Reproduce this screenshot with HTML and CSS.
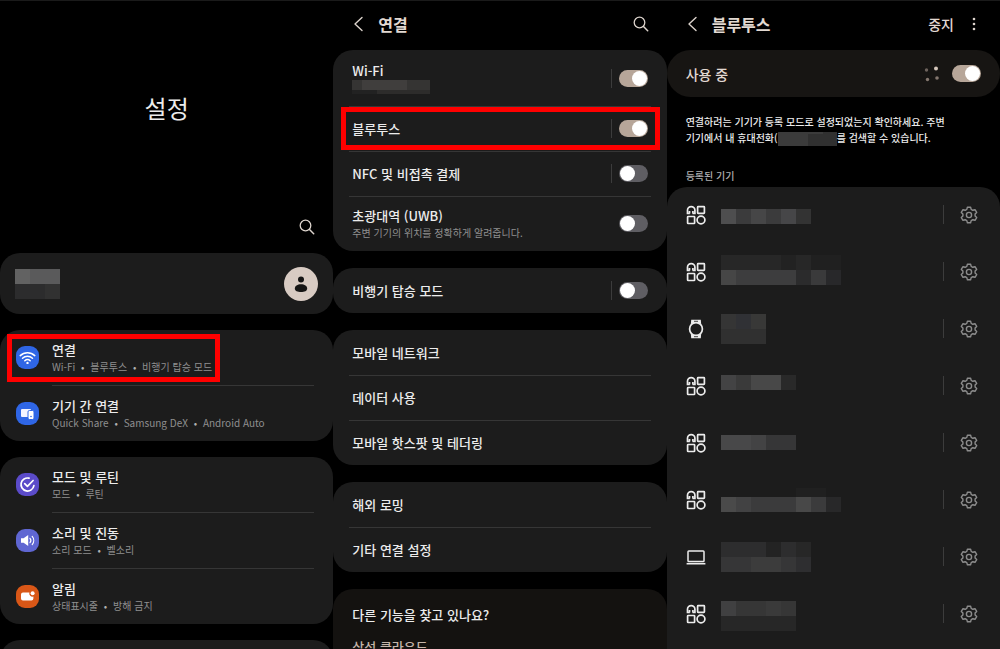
FILE: index.html
```html
<!DOCTYPE html>
<html lang="ko">
<head>
  <meta charset="UTF-8">
  <meta name="viewport" content="width=device-width, initial-scale=1.0">
  <title>블루투스 설정</title>
  <link rel="stylesheet" href="styles.css">
</head>
<body>
  <!-- Shared icons -->
  <svg class="sprite" aria-hidden="true">
    <symbol id="search" viewBox="0 0 18 18">
      <circle cx="7.5" cy="7.5" r="5.3" fill="none" stroke="currentColor" stroke-width="1.3"/>
      <path d="M11.5 11.5l4.2 4.2" stroke="currentColor" stroke-width="1.5" stroke-linecap="round"/>
    </symbol>
    <symbol id="back" viewBox="0 0 12 18">
      <path d="M10 2.5L3 9l7 6.5" fill="none" stroke="currentColor" stroke-width="1.4" stroke-linecap="round" stroke-linejoin="round"/>
    </symbol>
    <symbol id="devices" viewBox="0 0 20 20">
      <g fill="none" stroke="currentColor" stroke-width="1.7">
        <path d="M3.8 8.500H1.500V5.300a3.700 3.700 0 0 1 7.400 0V8.500H6.600M3.500 8.500V6M6.900 8.500V6"/>
        <rect x="11.600" y="1.600" width="6.800" height="6.800" rx=".6"/>
        <rect x="1.600" y="11.500" width="7" height="7" rx=".6"/>
        <circle cx="15" cy="15" r="3.900"/>
      </g>
    </symbol>
    <symbol id="watch" viewBox="0 0 20 20">
      <circle cx="10" cy="10" r="6.400" fill="none" stroke="currentColor" stroke-width="1.700"/>
      <path d="M4.800 5.500L5.200.8h9.600l.4 4.700-2-1.600H6.800zM4.800 14.500L5.200 19.200h9.600l.4-4.700-2 1.600H6.800z" fill="currentColor"/>
      <path d="M8 2.300h4M8 17.700h4" stroke="#1c1c1c" stroke-width=".8"/>
    </symbol>
    <symbol id="laptop" viewBox="0 0 20 20">
      <rect x="2" y="4" width="16" height="10.500" rx=".8" fill="none" stroke="currentColor" stroke-width="1.500"/>
      <path d="M.6 16.700h18.800" stroke="currentColor" stroke-width="1.600"/>
    </symbol>
    <symbol id="gear" viewBox="0 0 20 20">
      <g fill="none" stroke="currentColor" stroke-width="1.400" stroke-linejoin="round">
        <path d="M8.400 2.200h3.200l.6 2.200 1.600.9 2.200-.6 1.700 2.700-1.600 1.700v1.800l1.600 1.700-1.700 2.700-2.200-.6-1.600.9-.6 2.200H8.400l-.6-2.200-1.600-.9-2.200.6-1.700-2.700 1.600-1.700V9.100L2.300 7.400 4 4.700l2.200.6 1.600-.9z"/>
        <circle cx="10" cy="10" r="2.600"/>
      </g>
    </symbol>
  </svg>

  <!-- Settings home -->
  <section class="screen">
    <div class="hero">
      <h1>설정</h1>
      <button class="icon-btn hero-search" aria-label="검색"><svg width="18" height="18"><use href="#search"/></svg></button>
    </div>
    <div class="card account">
      <svg width="45" height="30" shape-rendering="crispEdges" aria-hidden="true">
        <rect width="45" height="15" fill="#626262"/><rect x="15" width="30" height="15" fill="#5a5a5b"/>
        <rect y="15" width="45" height="15" fill="#2c2c2d"/><rect x="30" y="15" width="15" height="15" fill="#313131"/>
      </svg>
      <svg width="34" height="34" viewBox="0 0 34 34" aria-hidden="true">
        <circle cx="17" cy="17" r="17" fill="#d8cbc3"/>
        <circle cx="17" cy="12.500" r="3" fill="#151515"/>
        <path d="M10.800 21.500c0-2.500 2.700-4.300 6.200-4.300s6.200 1.800 6.200 4.300-2.700 3.500-6.200 3.500-6.200-1-6.200-3.500z" fill="#151515"/>
      </svg>
    </div>
    <div class="card menu">
      <a href="#connections" class="marked">
        <svg class="app blue" viewBox="0 0 23 23">
          <g fill="none" stroke="#fff" stroke-width="1.500" stroke-linecap="round">
            <path d="M4.200 9.600a10.500 10.500 0 0 1 14.600 0M6.500 12.200a7.200 7.200 0 0 1 10 0M8.800 14.700a4 4 0 0 1 5.400 0"/>
          </g>
          <circle cx="11.500" cy="16.900" r="1.200" fill="#fff"/>
        </svg>
        <span class="label">연결<small>Wi-Fi <i>•</i> 블루투스 <i>•</i> 비행기 탑승 모드</small></span>
      </a>
      <a href="#devices-link">
        <svg class="app blue" viewBox="0 0 23 23">
          <rect x="5" y="7" width="10" height="8" rx="1" fill="#f4f4ff"/>
          <rect x="12" y="8.500" width="6" height="9" rx="1.400" fill="#fff" stroke="#2f66e6"/>
          <circle cx="15" cy="14.500" r=".8" fill="#2f66e6"/>
        </svg>
        <span class="label">기기 간 연결<small>Quick Share <i>•</i> Samsung DeX <i>•</i> Android Auto</small></span>
      </a>
    </div>
    <div class="card menu">
      <a href="#modes">
        <svg class="app violet" viewBox="0 0 23 23">
          <path d="M13 5.200a6.500 6.500 0 1 0 4.900 7.500" fill="none" stroke="#fff" stroke-width="1.700" stroke-linecap="round"/>
          <path d="M8.700 10.700l2.700 2.700 5.700-5.900" fill="none" stroke="#fff" stroke-width="1.700" stroke-linecap="round" stroke-linejoin="round"/>
        </svg>
        <span class="label">모드 및 루틴<small>모드 <i>•</i> 루틴</small></span>
      </a>
      <a href="#sound">
        <svg class="app indigo" viewBox="0 0 23 23">
          <path d="M5 9.300h2.600l4.600-3.400v11.200l-4.600-3.400H5z" fill="#fff"/>
          <path d="M14 9.300a3.500 3.500 0 0 1 0 4.400M16.200 7.400a6.300 6.300 0 0 1 0 8.200" fill="none" stroke="#fff" stroke-width="1.200" stroke-linecap="round"/>
        </svg>
        <span class="label">소리 및 진동<small>소리 모드 <i>•</i> 벨소리</small></span>
      </a>
      <a href="#notifications">
        <svg class="app orange" viewBox="0 0 23 23">
          <path d="M7 7.500h6.400a3.200 3.200 0 0 0 4 4V13.500a2 2 0 0 1-2 2H7a2 2 0 0 1-2-2v-4a2 2 0 0 1 2-2z" fill="#fff"/>
          <circle cx="16.600" cy="8.300" r="2" fill="#fff"/>
        </svg>
        <span class="label">알림<small>상태표시줄 <i>•</i> 방해 금지</small></span>
      </a>
    </div>
    <div class="card next"></div>
  </section>

  <!-- Connections -->
  <section class="screen wide" id="connections">
    <header>
      <button class="icon-btn" aria-label="뒤로"><svg width="12" height="18"><use href="#back"/></svg></button>
      <h2>연결</h2>
      <button class="icon-btn" aria-label="검색"><svg width="18" height="18"><use href="#search"/></svg></button>
    </header>
    <div class="card list">
      <div class="row wifi">
        <label for="wifi">Wi-Fi
          <svg width="78" height="14" shape-rendering="crispEdges" aria-hidden="true">
            <rect width="78" height="14" fill="#2d2c2b"/><rect width="78" height="10" fill="#353433"/>
            <rect x="10" width="45" height="10" fill="#403e3d"/><rect y="10" width="25" height="4" fill="#222"/>
          </svg>
        </label>
        <span class="bar"></span><input type="checkbox" class="switch" id="wifi" checked>
      </div>
      <div class="row marked">
        <label for="bt">블루투스</label>
        <span class="bar"></span><input type="checkbox" class="switch" id="bt" checked>
      </div>
      <div class="row">
        <label for="nfc">NFC 및 비접촉 결제</label>
        <span class="bar"></span><input type="checkbox" class="switch" id="nfc">
      </div>
      <div class="row tall">
        <label for="uwb">초광대역 (UWB)<small>주변 기기의 위치를 정확하게 알려줍니다.</small></label>
        <input type="checkbox" class="switch" id="uwb">
      </div>
    </div>
    <div class="card list">
      <div class="row">
        <label for="plane">비행기 탑승 모드</label>
        <span class="bar"></span><input type="checkbox" class="switch" id="plane">
      </div>
    </div>
    <div class="card list">
      <a class="row" href="#network">모바일 네트워크</a>
      <a class="row" href="#data">데이터 사용</a>
      <a class="row" href="#hotspot">모바일 핫스팟 및 테더링</a>
    </div>
    <div class="card list">
      <a class="row" href="#roaming">해외 로밍</a>
      <a class="row" href="#more">기타 연결 설정</a>
    </div>
    <div class="card related">
      <h3>다른 기능을 찾고 있나요?</h3>
      <a href="#cloud">삼성 클라우드</a>
    </div>
  </section>

  <!-- Bluetooth -->
  <section class="screen wide">
    <header>
      <button class="icon-btn" aria-label="뒤로"><svg width="12" height="18"><use href="#back"/></svg></button>
      <h2>블루투스</h2>
      <button class="stop">중지</button>
      <button class="icon-btn" aria-label="더보기">
        <svg width="18" height="18" viewBox="0 0 18 18" fill="currentColor"><circle cx="9" cy="4" r="1.300"/><circle cx="9" cy="9" r="1.300"/><circle cx="9" cy="14" r="1.300"/></svg>
      </button>
    </header>
    <div class="card active">
      <label for="power">사용 중</label>
      <svg width="16" height="16" viewBox="0 0 16 16" aria-hidden="true">
        <circle cx="2.500" cy="4" r="1.700" fill="#6d625c"/><circle cx="12" cy="2.500" r="2" fill="#d5c6bb"/>
        <circle cx="3.500" cy="13.500" r="1.700" fill="#84776f"/><circle cx="13" cy="12" r="1.800" fill="#84776f"/>
      </svg>
      <input type="checkbox" class="switch" id="power" checked>
    </div>
    <div class="hint">
      <p>연결하려는 기기가 등록 모드로 설정되었는지 확인하세요. 주변 기기에서 내 휴대전화(<svg width="59" height="14" shape-rendering="crispEdges" aria-hidden="true"><rect width="59" height="14" fill="#303030"/><rect width="30" height="14" fill="#3b3b3b"/><rect x="30" width="15" height="2" fill="#3b3b3b"/></svg>를 검색할 수 있습니다.</p>
      <h3>등록된 기기</h3>
    </div>
    <ul class="card paired">
      <li>
        <svg class="kind"><use href="#devices"/></svg>
        <svg class="name" width="90" height="19" viewBox="0 -4 90 19" shape-rendering="crispEdges">
          <rect width="90" height="15" fill="#3b3b3c"/><rect width="15" height="15" fill="#4e4e4f"/><rect x="30" width="15" height="15" fill="#464647"/><rect x="60" width="15" height="15" fill="#464648"/><rect x="75" width="15" height="15" fill="#333"/>
        </svg>
        <span class="bar"></span><button class="icon-btn" aria-label="기기 설정"><svg class="gear"><use href="#gear"/></svg></button>
      </li>
      <li>
        <svg class="kind"><use href="#devices"/></svg>
        <svg class="name" width="120" height="34" shape-rendering="crispEdges">
          <rect width="120" height="15" fill="#272727"/><rect x="60" width="15" height="15" fill="#222"/><rect x="90" width="30" height="15" fill="#202020"/>
          <rect y="15" width="75" height="15" fill="#3d3d3e"/><rect y="15" width="15" height="15" fill="#464646"/><rect x="75" y="15" width="15" height="15" fill="#2b2b2c"/><rect x="90" y="15" width="15" height="15" fill="#3a3a3b"/><rect x="105" y="15" width="15" height="15" fill="#28282a"/>
        </svg>
        <span class="bar"></span><button class="icon-btn" aria-label="기기 설정"><svg class="gear"><use href="#gear"/></svg></button>
      </li>
      <li>
        <svg class="kind"><use href="#watch"/></svg>
        <svg class="name" width="45" height="30" shape-rendering="crispEdges">
          <rect width="45" height="30" fill="#303030"/><rect width="15" height="15" fill="#353535"/><rect x="15" width="15" height="15" fill="#303135"/><rect x="30" width="15" height="15" fill="#383837"/>
        </svg>
        <span class="bar"></span><button class="icon-btn" aria-label="기기 설정"><svg class="gear"><use href="#gear"/></svg></button>
      </li>
      <li>
        <svg class="kind"><use href="#devices"/></svg>
        <svg class="name" width="75" height="21" shape-rendering="crispEdges">
          <rect width="75" height="15" fill="#484848"/><rect width="15" height="15" fill="#434344"/><rect x="15" width="15" height="15" fill="#3a3a3a"/><rect x="60" width="15" height="15" fill="#292929"/>
        </svg>
        <span class="bar"></span><button class="icon-btn" aria-label="기기 설정"><svg class="gear"><use href="#gear"/></svg></button>
      </li>
      <li>
        <svg class="kind"><use href="#devices"/></svg>
        <svg class="name" width="75" height="15" shape-rendering="crispEdges">
          <rect width="75" height="15" fill="#363637"/><rect width="30" height="15" fill="#484849"/><rect x="30" width="15" height="15" fill="#434344"/>
        </svg>
        <span class="bar"></span><button class="icon-btn" aria-label="기기 설정"><svg class="gear"><use href="#gear"/></svg></button>
      </li>
      <li>
        <svg class="kind"><use href="#devices"/></svg>
        <svg class="name" width="120" height="24" shape-rendering="crispEdges">
          <rect y="9" width="120" height="15" fill="#3b3b3c"/><rect y="9" width="15" height="15" fill="#4a4a4a"/><rect x="15" y="9" width="15" height="15" fill="#424243"/><rect x="75" y="9" width="15" height="15" fill="#484848"/><rect x="105" y="9" width="15" height="15" fill="#282829"/><rect x="75" width="30" height="9" fill="#202020"/>
        </svg>
        <span class="bar"></span><button class="icon-btn" aria-label="기기 설정"><svg class="gear"><use href="#gear"/></svg></button>
      </li>
      <li>
        <svg class="kind"><use href="#laptop"/></svg>
        <svg class="name" width="90" height="30" shape-rendering="crispEdges">
          <rect width="90" height="15" fill="#2d2d2e"/><rect x="45" width="15" height="15" fill="#232323"/><rect x="75" width="15" height="15" fill="#272727"/><rect y="15" width="90" height="15" fill="#363637"/><rect x="30" y="15" width="30" height="15" fill="#3c3c3c"/><rect x="75" y="15" width="15" height="15" fill="#2e2e30"/>
        </svg>
        <span class="bar"></span><button class="icon-btn" aria-label="기기 설정"><svg class="gear"><use href="#gear"/></svg></button>
      </li>
      <li>
        <svg class="kind"><use href="#devices"/></svg>
        <svg class="name" width="75" height="34" viewBox="0 -4 75 34" shape-rendering="crispEdges">
          <rect width="75" height="15" fill="#363636"/><rect width="15" height="15" fill="#404041"/><rect x="45" width="15" height="15" fill="#3a3a3a"/><rect y="15" width="75" height="15" fill="#272727"/>
        </svg>
        <span class="bar"></span><button class="icon-btn" aria-label="기기 설정"><svg class="gear"><use href="#gear"/></svg></button>
      </li>
    </ul>
  </section>
</body>
</html>
```
FILE: styles.css
```css
* {
  box-sizing: border-box;
}

body {
  margin: 0;
  height: 100vh;
  overflow: hidden;
  display: grid;
  grid-template-columns: repeat(3, 1fr);
  background: #000;
  color: #ececec;
  font-family: "Noto Sans CJK KR", sans-serif;
  font-size: 13px;
  font-weight: 500;
  line-height: 18px;
}

h1, h2, h3, p, ul {
  margin: 0;
  padding: 0;
}

a {
  color: inherit;
  text-decoration: none;
}

svg {
  display: block;
  flex: none;
}

button {
  border: 0;
  padding: 0;
  background: none;
  color: inherit;
  font: inherit;
}

small {
  display: block;
  color: #8f8f8f;
  font-size: 10px;
  font-weight: 400;
  line-height: 15px;
}

.sprite {
  position: absolute;
  width: 0;
  height: 0;
}

.screen {
  min-width: 0;
  height: 100vh;
  overflow: hidden;
  display: flex;
  flex-direction: column;
  gap: 16px;
  border-top: 1px solid #1a1a1a;
}

.wide {
  gap: 17px;
}

.card {
  flex: none;
  background: #1c1c1c;
  border-radius: 20px;
}

.icon-btn {
  display: flex;
  color: #dcd3cc;
}

/* Red frame round the item to tap */
.marked {
  position: relative;
}

.marked::after {
  content: "";
  position: absolute;
  box-sizing: border-box;
  border: 5px solid #f00;
}

/* Settings home */
.hero {
  flex: none;
  height: 236px;
  display: flex;
  flex-direction: column;
  justify-content: space-between;
  align-items: center;
  padding: 89px 17px 1px;
}

.hero h1 {
  font-size: 24px;
  font-weight: 400;
  line-height: 36px;
}

.hero-search {
  align-self: flex-end;
}

.account {
  height: 61px;
  display: flex;
  align-items: center;
  justify-content: space-between;
  padding: 0 15px;
}

.menu a {
  height: 56px;
  display: flex;
  align-items: center;
  gap: 13px;
  padding-left: 16px;
}

.menu a:first-child {
  height: 55px;
}

.menu .label {
  flex: 1;
  height: 100%;
  margin-right: 19px;
  padding-top: 11px;
}

.menu a + a .label {
  border-top: 1px solid #363636;
}

.menu i {
  margin: 0 3px;
  color: #b0b0b0;
  font-style: normal;
}

.menu .marked::after {
  top: 4px;
  left: 7px;
  width: 213px;
  height: 48px;
}

.next {
  height: 56px;
}

.app {
  width: 23px;
  height: 23px;
  border-radius: 9px;
}

.blue {
  background: #2f66e6;
}

.violet {
  background: #5b4bc9;
}

.indigo {
  background: #5f66d2;
}

.orange {
  background: #d95717;
}

/* Header bar */
header {
  flex: none;
  height: 32px;
  display: flex;
  align-items: center;
  padding: 14px 17px 0 19px;
  color: #e2d9d2;
}

header h2 {
  flex: 1;
  margin-left: 14px;
  font-size: 16px;
  font-weight: 700;
  line-height: 20px;
}

.stop {
  margin-right: 11px;
  font-size: 14px;
}

/* Rows with switches */
.row {
  height: 45px;
  display: flex;
  align-items: center;
  gap: 7px;
  padding: 0 19px;
  background: linear-gradient(#363636, #363636) no-repeat center top / calc(100% - 32px) 1px;
}

.row:first-child {
  background: none;
}

.row label {
  flex: 1;
}

.wifi {
  height: 56px;
}

.tall {
  height: 55px;
}

.list .marked::after {
  top: 1px;
  bottom: 1px;
  left: 8px;
  right: 7px;
}

.bar {
  width: 1px;
  height: 19px;
  background: #3c3c3c;
}

.switch {
  appearance: none;
  display: flex;
  width: 29px;
  height: 17px;
  margin: 0;
  padding: 1px;
  border-radius: 9px;
  background: #5f5e63;
}

.switch::before {
  content: "";
  width: 15px;
  height: 15px;
  border-radius: 50%;
  background: #fff;
}

.switch:checked {
  justify-content: flex-end;
  background: #b7a699;
}

.related {
  height: 120px;
  padding: 16px 19px;
  background: #141210;
}

.related h3 {
  font-size: 13px;
  font-weight: 500;
  line-height: 20px;
}

.related a {
  display: block;
  margin-top: 13px;
  color: #c4b5aa;
}

/* Bluetooth */
.active {
  height: 47px;
  display: flex;
  align-items: center;
  gap: 12px;
  padding: 0 19px;
  border-radius: 24px;
  background: #171513;
  color: #e2d9d2;
  font-size: 14px;
}

.active label {
  flex: 1;
}

.hint {
  flex: none;
  height: 73px;
  display: flex;
  flex-direction: column;
  justify-content: space-between;
  padding: 0 19px 3px;
  font-size: 10px;
  line-height: 16px;
  word-break: keep-all;
}

.hint svg {
  display: inline-block;
  vertical-align: middle;
}

.hint h3 {
  color: #b0b0b0;
  font-size: 10px;
  font-weight: 500;
}

.screen .paired {
  margin-top: -17px;
  padding-bottom: 30px;
  list-style: none;
}

.paired li {
  height: 57px;
  display: flex;
  align-items: center;
  padding: 0 21px 2px 19px;
}

.paired .name {
  margin: 0 auto 0 15px;
}

.paired .bar {
  margin-right: 15px;
}

.kind {
  width: 20px;
  height: 20px;
}

.gear {
  width: 20px;
  height: 20px;
  color: #8c8c8c;
}
```
